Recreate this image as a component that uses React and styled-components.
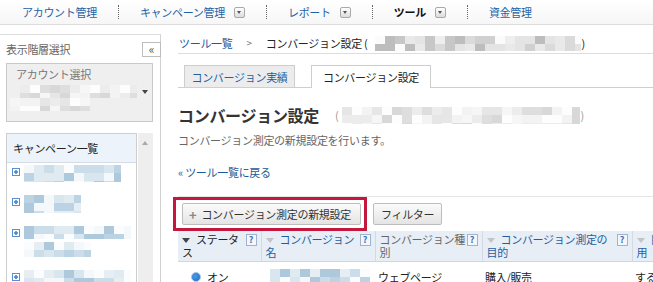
import React from "react";
import styled, { createGlobalStyle } from "styled-components";

const GlobalStyle = createGlobalStyle`
  html, body { margin: 0; padding: 0; background: #fff; overflow: hidden; }
  body {
    font-family: "Noto Sans CJK JP", "Noto Sans", sans-serif;
    font-size: 11px;
    letter-spacing: -0.3px;
    color: #333;
  }
`;

const palettes = {
  gray: ["#fbfbfb", "#eeeeee", "#e4e4e4", "#dadada", "#d0d0d0", "#c7c7c7", "#e9e9e9", "#bdbdbd"],
  light: ["#fdfdfd", "#f3f3f3", "#ececec", "#e6e6e6", "#dedede", "#f6f6f6", "#d8d8d8"],
  blue: ["#f5f8fb", "#e6eef4", "#d8e6ef", "#cadde9", "#bcd3e3", "#e0eaf1", "#aec9dc", "#fafcfd"],
};

// pixelated stand-in for the blurred-out names in the shot
const mosaic = (w, h, tone, seed) => {
  let s = seed * 7919 + 17;
  const rnd = () => {
    s = (s * 9301 + 49297) % 233280;
    return s / 233280;
  };
  const pal = palettes[tone];
  const rowH = h <= 10 ? h : 8;
  const rows = Math.ceil(h / rowH);
  const layers = [];
  for (let r = 0; r < rows; r++) {
    const stops = [];
    for (let x = 0; x < w; x += 10) {
      const c = pal[Math.floor(rnd() * pal.length)];
      stops.push(`${c} ${x}px ${x + 10}px`);
    }
    layers.push(`linear-gradient(90deg, ${stops.join(", ")}) 0 ${r * rowH}px / 100% ${rowH}px no-repeat`);
  }
  return layers.join(", ");
};

const BlurBox = styled.span`
  display: inline-block;
  vertical-align: middle;
  width: ${(p) => p.$w}px;
  height: ${(p) => p.$h}px;
  margin-left: ${(p) => p.$ml || 0}px;
  flex-shrink: 0;
`;

const Blur = ({ w, h, tone = "gray", seed = 1, ml }) => (
  <BlurBox $w={w} $h={h} $ml={ml} style={{ background: mosaic(w, h, tone, seed) }} />
);

/* ---------- top nav ---------- */
const Nav = styled.nav`
  display: flex;
  align-items: center;
  height: 24px;
  padding-left: 1px;
  border-bottom: 1px solid #dcdcdc;
  background: linear-gradient(#ffffff, #f6f6f6);
`;

const NavItem = styled.div`
  display: flex;
  align-items: center;
  height: 14px;
  padding: 0 21px;
  color: ${(p) => (p.$active ? "#111" : "#1f63a6")};
  font-weight: ${(p) => (p.$active ? 700 : 400)};
  white-space: nowrap;
  & + & { border-left: 1px dotted #666; }
`;

const Drop = styled.span`
  position: relative;
  display: inline-block;
  width: 9px;
  height: 9px;
  margin-left: 9px;
  border: 1px solid #a9a9a9;
  border-radius: 2px;
  background: linear-gradient(#fff, #dcdcdc);
  &::after {
    content: "";
    position: absolute;
    left: 2px;
    top: 3px;
    border-left: 2.5px solid transparent;
    border-right: 2.5px solid transparent;
    border-top: 3px solid #555;
  }
`;

/* ---------- layout ---------- */
const Layout = styled.div`
  display: flex;
  align-items: flex-start;
`;

const Sidebar = styled.aside`
  position: relative;
  flex-shrink: 0;
  box-sizing: border-box;
  width: 161px;
  height: 257px;
  margin-top: 9px;
  padding: 0 7px 0 6px;
  border-top: 1px solid #dedede;
  border-right: 1px solid #d2d2d2;
`;

const SideTitle = styled.div`
  height: 28px;
  line-height: 28px;
  color: #666;
`;

const Collapse = styled.div`
  position: absolute;
  top: 7px;
  right: -1px;
  width: 17px;
  height: 13px;
  border: 1px solid #bdbdbd;
  background: #fff;
  color: #555;
  font-size: 12px;
  line-height: 12px;
  text-align: center;
`;

const AccountBox = styled.div`
  box-sizing: border-box;
  height: 59px;
  padding: 3px 0 0 0;
  border: 1px solid #c9c9c9;
  background: #efefef;
`;

const AccountLabel = styled.div`
  padding-left: 9px;
  line-height: 14px;
  color: #777;
`;

const SelectRow = styled.div`
  display: flex;
  align-items: center;
  margin-top: ${(p) => p.$mt || 0}px;
`;

const SelectArrow = styled.span`
  margin-left: 5px;
  border-left: 3px solid transparent;
  border-right: 3px solid transparent;
  border-top: 4px solid #444;
`;

const CampaignPanel = styled.div`
  display: flex;
  height: 160px;
  margin-top: 11px;
`;

const CampaignList = styled.div`
  width: 131px;
  box-sizing: border-box;
  border: 1px solid #cdcdcd;
  border-bottom: none;
`;

const ListHead = styled.div`
  height: 28px;
  line-height: 28px;
  padding-left: 6px;
  background: #edf3fb;
  border-bottom: 1px solid #d5dce6;
  color: #222;
`;

const ListBody = styled.div`
  padding-left: 5px;
`;

const ListItem = styled.div`
  display: flex;
  align-items: flex-start;
  line-height: 17px;
  & + & { margin-top: 11px; }
`;

const Expand = styled.span`
  flex-shrink: 0;
  box-sizing: border-box;
  width: 8px;
  height: 8px;
  margin: 5px 4px 0 0;
  border: 1px solid #5a8fd6;
  background: radial-gradient(circle, #4f8ccf 0 1.5px, #fff 2px);
`;

const ItemLines = styled.div`
  display: flex;
  flex-direction: column;
  gap: 3px;
  padding-top: 2px;
`;

const Scrollbar = styled.div`
  position: relative;
  width: 15px;
  margin-left: 1px;
  background: #eeeeee;
  &::before {
    content: "";
    position: absolute;
    top: 8px;
    left: 4px;
    border-left: 3.5px solid transparent;
    border-right: 3.5px solid transparent;
    border-bottom: 4px solid #a8a8a8;
  }
`;

/* ---------- main ---------- */
const Main = styled.main`
  flex: 1;
  min-width: 0;
  margin-left: 17px;
`;

const Crumbs = styled.div`
  display: flex;
  align-items: center;
  padding: 10px 0 2px 1px;
  line-height: 16px;
  border-bottom: 1px solid #dedede;
  color: #222;
  white-space: nowrap;
`;

const Link = styled.a`
  color: #1b5c99;
  text-decoration: none;
`;

const Gt = styled.span`
  margin: 0 14px;
  color: #777;
  font-size: 10px;
`;

const Tabs = styled.div`
  display: flex;
  gap: 16px;
  height: 22px;
  margin-top: 11px;
  padding-left: 6px;
  border-bottom: 1px solid #cfcfcf;
`;

const Tab = styled.div`
  box-sizing: border-box;
  width: ${(p) => p.$w}px;
  height: ${(p) => (p.$active ? 23 : 22)}px;
  line-height: 22px;
  text-align: center;
  border: 1px solid #cdcdcd;
  border-bottom: none;
  background: ${(p) => (p.$active ? "#fff" : "#ececec")};
  color: ${(p) => (p.$active ? "#222" : "#245f9e")};
`;

const TitleRow = styled.div`
  display: flex;
  align-items: center;
  margin-top: 16px;
  height: 22px;
  color: #999;
  white-space: nowrap;
`;

const Title = styled.h1`
  margin: 0 16px 0 0;
  font-size: 16px;
  font-weight: 700;
  color: #333;
`;

const Desc = styled.p`
  margin: 6px 0 0;
  line-height: 16px;
  color: #666;
`;

const Back = styled(Link)`
  display: block;
  margin-top: 16px;
  line-height: 16px;
`;

const Toolbar = styled.div`
  display: flex;
  align-items: center;
  margin-top: 16px;
  border-top: 1px solid #e6e6e6;
`;

const Highlight = styled.div`
  margin-left: -5px;
  padding: 3px 3px 3px 6px;
  border: 3px solid #c3173d;
`;

const Button = styled.button`
  display: flex;
  align-items: center;
  height: 22px;
  margin-left: ${(p) => p.$ml || 0}px;
  padding: 0 ${(p) => p.$pr || 7}px 0 ${(p) => p.$pl || 7}px;
  border: 1px solid #bdbdbd;
  border-radius: 2px;
  background: linear-gradient(#fbfbfb, #e4e4e4);
  font: inherit;
  letter-spacing: inherit;
  color: #333;
  white-space: nowrap;
`;

const Plus = styled.span`
  margin-right: 5px;
  color: #888;
  font-size: 13px;
  font-weight: 700;
`;

const Table = styled.table`
  width: 554px;
  table-layout: fixed;
  border-collapse: collapse;
`;

const Th = styled.th`
  padding: 2px 4px 2px 4px;
  height: 24px;
  vertical-align: top;
  text-align: left;
  font-weight: 400;
  line-height: 13px;
  background: #e8eef6;
  border-bottom: 1px solid #cfd6df;
  & + & { border-left: 1px solid #d3dae3; }
  color: ${(p) => p.$tone === "dark" ? "#222" : p.$tone === "plain" ? "#666" : "#1d5fa0"};
`;

const SortArrow = styled.span`
  display: inline-block;
  margin-right: 6px;
  vertical-align: 1px;
  border-left: 4px solid transparent;
  border-right: 4px solid transparent;
  border-top: 5px solid ${(p) => (p.$on ? "#444" : "#c4c4c4")};
`;

const Help = styled.span`
  float: right;
  box-sizing: border-box;
  width: 11px;
  height: 12px;
  margin-top: 1px;
  border: 1px solid #9fb3cc;
  background: #f3f6fb;
  color: #3a72b8;
  font-size: 9px;
  font-weight: 700;
  line-height: 10px;
  text-align: center;
`;

const Td = styled.td`
  padding: 6px 3px 4px;
  line-height: 14px;
  color: #222;
  white-space: nowrap;
  overflow: hidden;
`;

const Status = styled.span`
  display: inline-flex;
  align-items: center;
  padding-left: 10px;
  &::before {
    content: "";
    width: 8px;
    height: 8px;
    margin-right: 6px;
    border-radius: 50%;
    border: 1px solid #a9c8ea;
    background: radial-gradient(circle at 40% 40%, #4a9be6, #1c6cc4);
  }
`;

const campaigns = [
  [[97, 17, 3]],
  [[57, 18, 5]],
  [[107, 13, 8], [67, 15, 11]],
  [[107, 16, 14]],
];

export default function App() {
  return (
    <>
      <GlobalStyle />
      <Nav>
        <NavItem>アカウント管理</NavItem>
        <NavItem>キャンペーン管理<Drop /></NavItem>
        <NavItem>レポート<Drop /></NavItem>
        <NavItem $active>ツール<Drop /></NavItem>
        <NavItem>資金管理</NavItem>
      </Nav>
      <Layout>
        <Sidebar>
          <SideTitle>表示階層選択</SideTitle>
          <Collapse>«</Collapse>
          <AccountBox>
            <AccountLabel>アカウント選択</AccountLabel>
            <SelectRow $mt={4}>
              <Blur w={117} h={13} tone="light" seed={2} ml={13} />
              <SelectArrow />
            </SelectRow>
            <SelectRow>
              <Blur w={80} h={13} tone="light" seed={4} ml={3} />
            </SelectRow>
          </AccountBox>
          <CampaignPanel>
            <CampaignList>
              <ListHead>キャンペーン一覧</ListHead>
              <ListBody>
                {campaigns.map((lines, i) => (
                  <ListItem key={i}>
                    <Expand />
                    <ItemLines>
                      {lines.map(([w, h, s]) => (
                        <Blur key={s} w={w} h={h} tone="blue" seed={s} />
                      ))}
                    </ItemLines>
                  </ListItem>
                ))}
              </ListBody>
            </CampaignList>
            <Scrollbar />
          </CampaignPanel>
        </Sidebar>
        <Main>
          <Crumbs>
            <Link>ツール一覧</Link>
            <Gt>&gt;</Gt>
            コンバージョン設定 (
            <Blur w={206} h={15} tone="gray" seed={7} ml={8} />
            )
          </Crumbs>
          <Tabs>
            <Tab $w={111}>コンバージョン実績</Tab>
            <Tab $w={120} $active>コンバージョン設定</Tab>
          </Tabs>
          <TitleRow>
            <Title>コンバージョン設定</Title>
            (
            <Blur w={238} h={17} tone="light" seed={9} ml={4} />
            )
          </TitleRow>
          <Desc>コンバージョン測定の新規設定を行います。</Desc>
          <Back>« ツール一覧に戻る</Back>
          <Toolbar>
            <Highlight>
              <Button $pl={6} $pr={9}>
                <Plus>+</Plus>コンバージョン測定の新規設定
              </Button>
            </Highlight>
            <Button $ml={6}>フィルター</Button>
          </Toolbar>
          <Table>
            <colgroup>
              <col style={{ width: 83 }} />
              <col style={{ width: 114 }} />
              <col style={{ width: 107 }} />
              <col style={{ width: 150 }} />
              <col style={{ width: 100 }} />
            </colgroup>
            <thead>
              <tr>
                <Th $tone="dark"><Help>?</Help><SortArrow $on />ステータス</Th>
                <Th><Help>?</Help><SortArrow />コンバージョン名</Th>
                <Th $tone="plain"><Help>?</Help>コンバージョン種別</Th>
                <Th><Help>?</Help><SortArrow />コンバージョン測定の目的</Th>
                <Th><SortArrow />目標値に利<br />用</Th>
              </tr>
            </thead>
            <tbody>
              <tr>
                <Td><Status>オン</Status></Td>
                <Td><Blur w={100} h={16} tone="blue" seed={21} ml={6} /></Td>
                <Td>ウェブページ</Td>
                <Td>購入/販売</Td>
                <Td>する</Td>
              </tr>
            </tbody>
          </Table>
        </Main>
      </Layout>
    </>
  );
}
